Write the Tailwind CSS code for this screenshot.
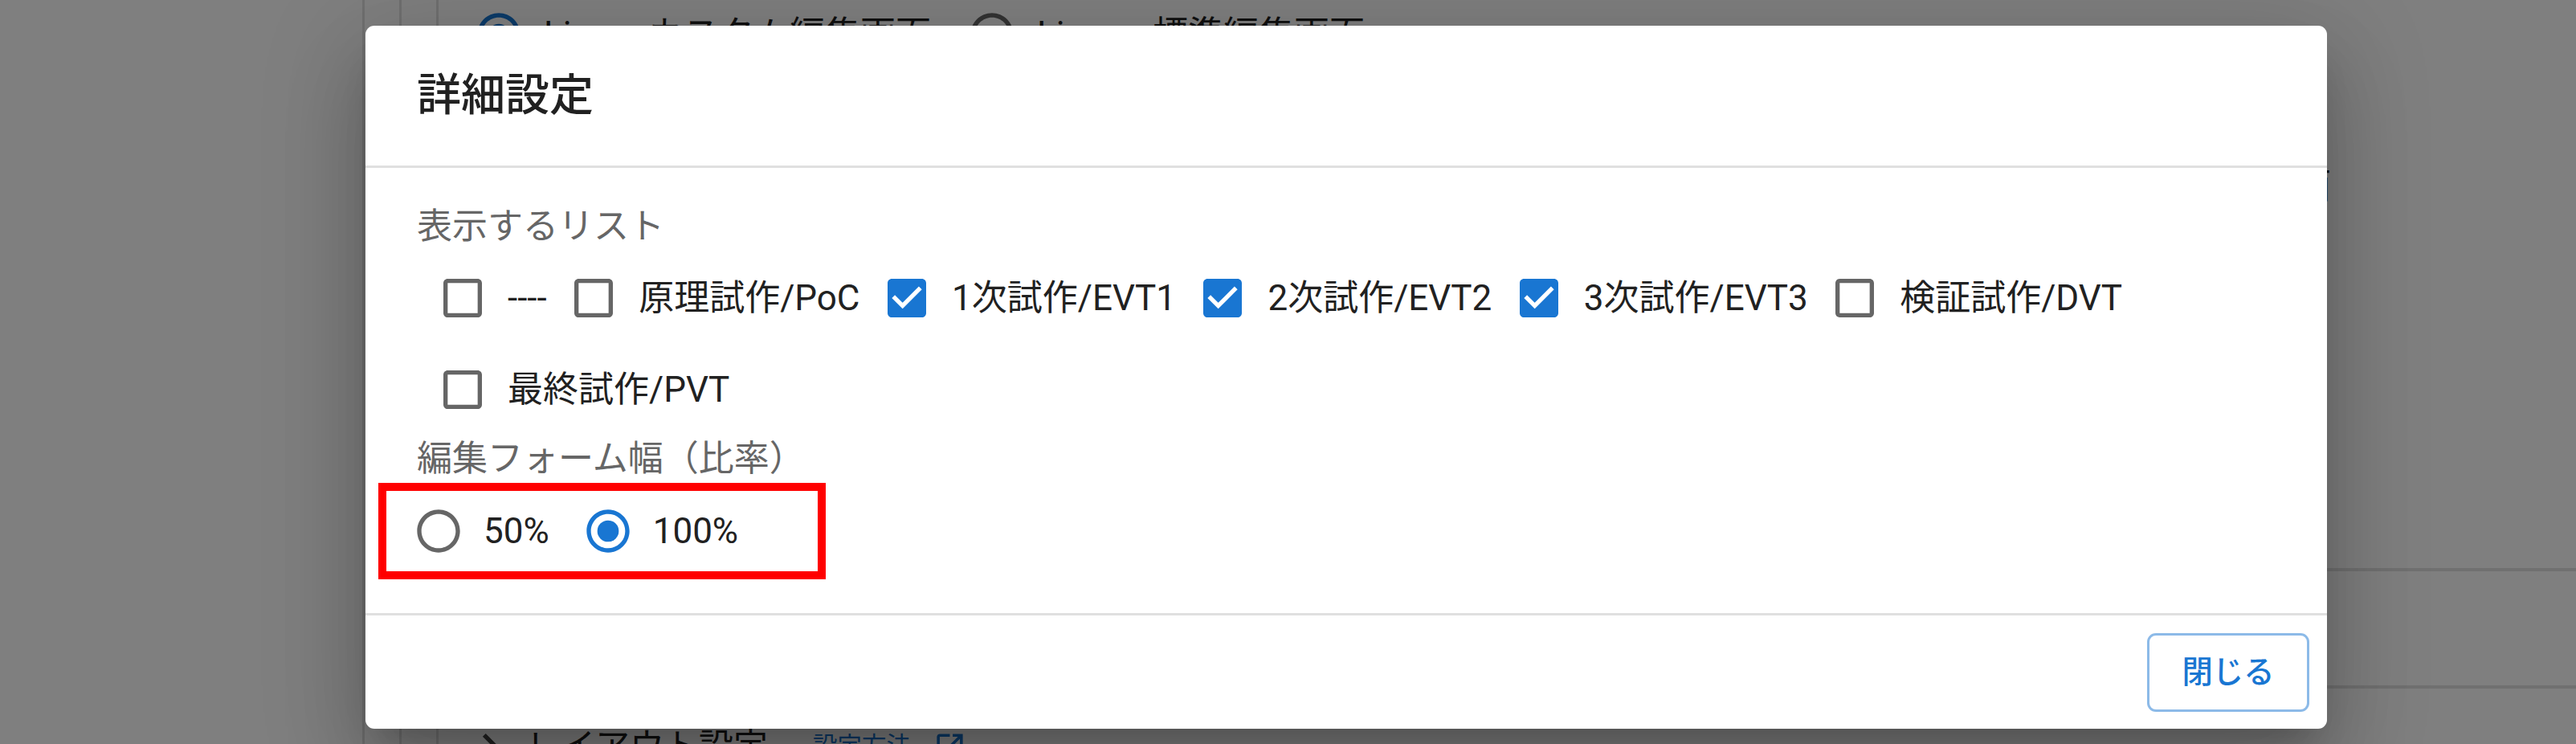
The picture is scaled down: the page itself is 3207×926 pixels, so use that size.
<!DOCTYPE html>
<html lang="ja">
<head>
  <meta charset="UTF-8">
  <title>詳細設定</title>
  <script src="https://cdn.jsdelivr.net/npm/@tailwindcss/browser@4"></script>
</head>
<body class="font-['Roboto','Noto_Sans_CJK_JP',sans-serif] text-[44px] leading-[64px] text-[#212121]">
  <div class="relative flex h-[926px] w-[3207px] overflow-hidden bg-white">
    <!-- page behind the dialog -->
    <div class="w-[454px] shrink-0 border-r-[3px] border-[#e0e0e0]"></div>
    <div class="w-[46px] shrink-0 border-r-[3px] border-[#e0e0e0]"></div>
    <div class="w-[46px] shrink-0 border-r-[3px] border-[#e0e0e0]"></div>
    <div class="flex min-w-0 flex-1 flex-col">
      <div class="flex h-[86px] shrink-0 items-center pl-[43px]">
        <svg class="h-16 w-16 shrink-0 text-[#1976d2]" viewBox="0 0 24 24" fill="currentColor"><path d="M12 2C6.48 2 2 6.48 2 12s4.48 10 10 10 10-4.48 10-10S17.52 2 12 2zm0 18c-4.42 0-8-3.58-8-8s3.58-8 8-8 8 3.58 8 8-3.58 8-8 8z"/><circle cx="12" cy="12" r="5"/></svg>
        <span class="ml-6 w-[130px]">Live</span>
        <span>カスタム編集画面</span>
        <svg class="ml-[44px] h-16 w-16 shrink-0 text-[#666666]" viewBox="0 0 24 24" fill="currentColor"><path d="M12 2C6.48 2 2 6.48 2 12s4.48 10 10 10 10-4.48 10-10S17.52 2 12 2zm0 18c-4.42 0-8-3.58-8-8s3.58-8 8-8 8 3.58 8 8-3.58 8-8 8z"/></svg>
        <span class="ml-6 w-[144px]">Live</span>
        <span>標準編集画面</span>
      </div>
      <div class="mt-[114px] flex h-[64px] shrink-0 justify-end pr-[305px]">面</div>
      <div class="mt-[443px] h-[4px] shrink-0 bg-[#e0e0e0]"></div>
      <div class="mt-[142px] h-[4px] shrink-0 bg-[#e0e0e0]"></div>
      <div class="mt-[40px] flex h-[64px] shrink-0 items-center pl-[32px]">
        <svg class="h-16 w-16 shrink-0 text-[#444444]" viewBox="0 0 24 24" fill="currentColor"><path d="M10 6L8.59 7.41 13.17 12l-4.58 4.59L10 18l6-6z"/></svg>
        <span class="ml-[13px] text-[43px]">レイアウト設定</span>
        <span class="ml-[56px] text-[30.5px] text-[#1976d2]">設定方法</span>
        <svg class="ml-[27px] h-[43px] w-[43px] shrink-0 text-[#1976d2]" viewBox="0 0 24 24" fill="currentColor"><path d="M19 19H5V5h7V3H5c-1.11 0-2 .9-2 2v14c0 1.1.89 2 2 2h14c1.1 0 2-.89 2-2v-7h-2v7zM14 3v2h3.59l-9.83 9.83 1.41 1.41L19 6.41V10h2V3h-7z"/></svg>
      </div>
    </div>

    <div class="absolute inset-0 bg-black/50"></div>

    <!-- 詳細設定 dialog -->
    <div class="absolute left-[455px] top-[32px] flex h-[875px] w-[2442px] flex-col rounded-[11px] bg-white shadow-[0_29px_40px_-19px_rgba(0,0,0,0.2),0_64px_101px_8px_rgba(0,0,0,0.14),0_24px_123px_21px_rgba(0,0,0,0.12)]">
      <h2 class="h-[177px] shrink-0 border-b-[3px] border-[#e0e0e0] px-16 pt-[44px] text-[55px] font-medium leading-[85px]">詳細設定</h2>
      <div class="h-[554px] shrink-0 px-16 pt-[41px]">
        <p class="text-[#666666]">表示するリスト</p>
        <div class="flex flex-wrap gap-x-[26.5px] pl-[25px]">
          <label class="flex h-[114px] items-center gap-6">
            <svg class="h-16 w-16 shrink-0 text-[#666666]" viewBox="0 0 24 24" fill="currentColor"><path d="M19 5v14H5V5h14m0-2H5c-1.1 0-2 .9-2 2v14c0 1.1.9 2 2 2h14c1.1 0 2-.9 2-2V5c0-1.1-.9-2-2-2z"/></svg>
            <span>----</span>
          </label>
          <label class="flex h-[114px] items-center gap-6">
            <svg class="h-16 w-16 shrink-0 text-[#666666]" viewBox="0 0 24 24" fill="currentColor"><path d="M19 5v14H5V5h14m0-2H5c-1.1 0-2 .9-2 2v14c0 1.1.9 2 2 2h14c1.1 0 2-.9 2-2V5c0-1.1-.9-2-2-2z"/></svg>
            <span>原理試作/PoC</span>
          </label>
          <label class="flex h-[114px] items-center gap-6">
            <svg class="h-16 w-16 shrink-0 text-[#1976d2]" viewBox="0 0 24 24" fill="currentColor"><path d="M19 3H5c-1.11 0-2 .9-2 2v14c0 1.1.89 2 2 2h14c1.11 0 2-.9 2-2V5c0-1.1-.89-2-2-2zm-9 14l-5-5 1.41-1.41L10 14.17l7.59-7.59L19 8l-9 9z"/></svg>
            <span>1次試作/EVT1</span>
          </label>
          <label class="flex h-[114px] items-center gap-6">
            <svg class="h-16 w-16 shrink-0 text-[#1976d2]" viewBox="0 0 24 24" fill="currentColor"><path d="M19 3H5c-1.11 0-2 .9-2 2v14c0 1.1.89 2 2 2h14c1.11 0 2-.9 2-2V5c0-1.1-.89-2-2-2zm-9 14l-5-5 1.41-1.41L10 14.17l7.59-7.59L19 8l-9 9z"/></svg>
            <span>2次試作/EVT2</span>
          </label>
          <label class="flex h-[114px] items-center gap-6">
            <svg class="h-16 w-16 shrink-0 text-[#1976d2]" viewBox="0 0 24 24" fill="currentColor"><path d="M19 3H5c-1.11 0-2 .9-2 2v14c0 1.1.89 2 2 2h14c1.11 0 2-.9 2-2V5c0-1.1-.89-2-2-2zm-9 14l-5-5 1.41-1.41L10 14.17l7.59-7.59L19 8l-9 9z"/></svg>
            <span>3次試作/EVT3</span>
          </label>
          <label class="flex h-[114px] items-center gap-6">
            <svg class="h-16 w-16 shrink-0 text-[#666666]" viewBox="0 0 24 24" fill="currentColor"><path d="M19 5v14H5V5h14m0-2H5c-1.1 0-2 .9-2 2v14c0 1.1.9 2 2 2h14c1.1 0 2-.9 2-2V5c0-1.1-.9-2-2-2z"/></svg>
            <span>検証試作/DVT</span>
          </label>
          <label class="flex h-[114px] items-center gap-6">
            <svg class="h-16 w-16 shrink-0 text-[#666666]" viewBox="0 0 24 24" fill="currentColor"><path d="M19 5v14H5V5h14m0-2H5c-1.1 0-2 .9-2 2v14c0 1.1.9 2 2 2h14c1.1 0 2-.9 2-2V5c0-1.1-.9-2-2-2z"/></svg>
            <span>最終試作/PVT</span>
          </label>
        </div>
        <p class="-mt-[3px] text-[#666666]">編集フォーム幅（比率）</p>
        <div class="-ml-[5px] flex h-[116px] items-center gap-x-[41px]">
          <label class="flex items-center gap-6">
            <svg class="h-16 w-16 shrink-0 text-[#666666]" viewBox="0 0 24 24" fill="currentColor"><path d="M12 2C6.48 2 2 6.48 2 12s4.48 10 10 10 10-4.48 10-10S17.52 2 12 2zm0 18c-4.42 0-8-3.58-8-8s3.58-8 8-8 8 3.58 8 8-3.58 8-8 8z"/></svg>
            <span>50%</span>
          </label>
          <label class="flex items-center gap-6">
            <svg class="h-16 w-16 shrink-0 text-[#1976d2]" viewBox="0 0 24 24" fill="currentColor"><path d="M12 2C6.48 2 2 6.48 2 12s4.48 10 10 10 10-4.48 10-10S17.52 2 12 2zm0 18c-4.42 0-8-3.58-8-8s3.58-8 8-8 8 3.58 8 8-3.58 8-8 8z"/><circle cx="12" cy="12" r="5"/></svg>
            <span>100%</span>
          </label>
        </div>
      </div>
      <div class="flex flex-1 items-center justify-end border-t-[3px] border-[#e0e0e0] pr-[22px]">
        <button class="flex h-[98px] w-[202px] items-center justify-center rounded-[11px] border-[3px] border-[#1976d2]/50 text-[38.3px] font-medium text-[#1976d2]">閉じる</button>
      </div>
      <!-- red annotation round the radios -->
      <div class="absolute left-[16px] top-[569px] h-[120px] w-[557px] border-[10px] border-[#ff0000]"></div>
    </div>
  </div>
</body>
</html>
